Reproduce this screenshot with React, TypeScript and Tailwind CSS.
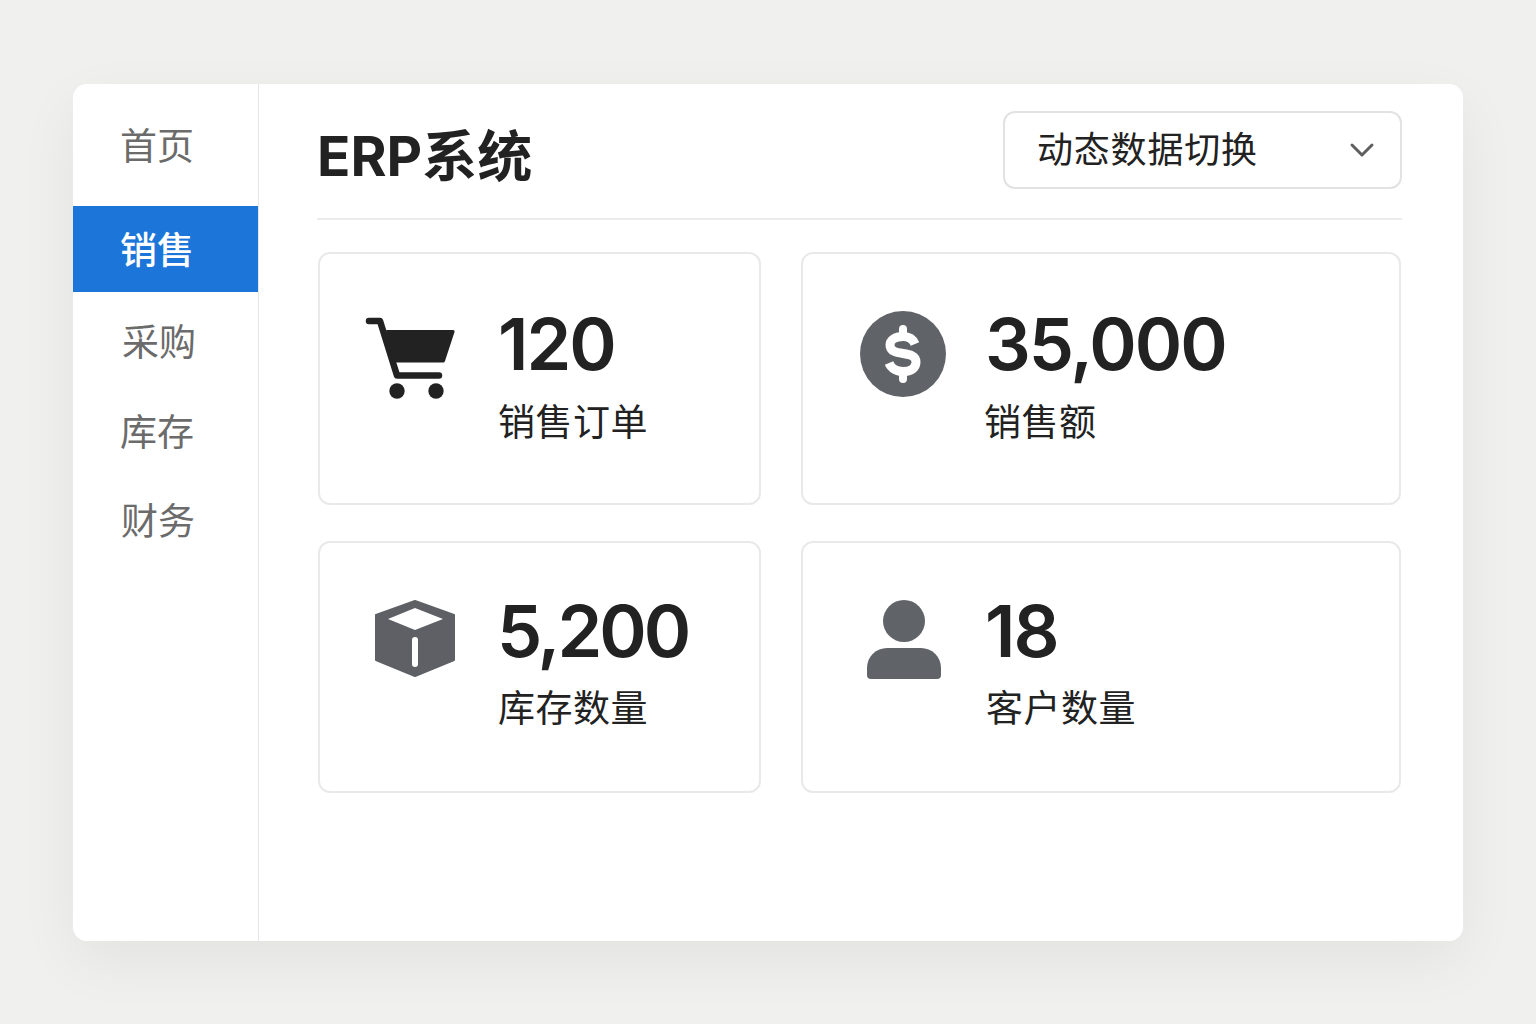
const navItems = [
  { label: '首页', className: 'h-[122px] pl-[47px] pt-[4px] text-[#6b6b6b]' },
  { label: '销售', className: 'h-[86px] pl-[47px] pt-[3px] bg-[#1c75d8] font-medium text-white' },
  { label: '采购', className: 'mt-[6px] h-[89px] pl-[49px] text-[#6b6b6b]' },
  { label: '库存', className: 'h-[89px] pl-[47px] pt-[2px] text-[#6b6b6b]' },
  { label: '财务', className: 'h-[89px] pl-[48px] pt-[2px] text-[#6b6b6b]' },
];

function CartIcon() {
  return (
    <svg viewBox="0 0 96 96" className="ml-[41px] mt-[56px] h-[96px] w-[96px] shrink-0">
      <path d="M8 11h11l17 54.500h42" fill="none" stroke="#222" strokeWidth="6.5" strokeLinecap="round" strokeLinejoin="round" />
      <path d="M25 20h67a1.500 1.500 0 0 1 1.500 2L84 51a2 2 0 0 1-2 1.500H34a2 2 0 0 1-2-1.500z" fill="#222" />
      <circle cx="36" cy="81" r="7.700" fill="#222" />
      <circle cx="75" cy="81" r="7.700" fill="#222" />
    </svg>
  );
}

function DollarIcon() {
  return (
    <svg viewBox="0 0 96 96" className="ml-[52px] mt-[52px] h-[96px] w-[96px] shrink-0">
      <circle cx="48" cy="48" r="43" fill="#606368" />
      <path
        d="M60 38C58 33 54 30.500 48 30.500 40 30.500 35 34 35 39 35 52 61 43 61 56 61 62 56 65.500 48 65.500 41 65.500 36 62 34 57"
        fill="none"
        stroke="#fff"
        strokeWidth="9"
      />
      <path d="M48 23v6M48 67v6" fill="none" stroke="#fff" strokeWidth="8" strokeLinecap="round" />
    </svg>
  );
}

function BoxIcon() {
  return (
    <svg viewBox="0 0 96 96" className="ml-[47px] mt-[47px] h-[96px] w-[96px] shrink-0">
      <path d="M48 11 87 25v45L48 86 9 70V25z" fill="#5e6065" stroke="#5e6065" strokeWidth="2" strokeLinejoin="round" />
      <path d="M48 18 76 29 48 40 21 29z" fill="#fff" />
      <rect x="45" y="47" width="6" height="30" rx="3" fill="#fff" />
    </svg>
  );
}

function PersonIcon() {
  return (
    <svg viewBox="0 0 96 96" className="ml-[52px] mt-[47px] h-[96px] w-[96px] shrink-0">
      <circle cx="49" cy="31" r="21" fill="#606368" />
      <path d="M12 85V78a20 20 0 0 1 20-20h34a20 20 0 0 1 20 20v7a4 4 0 0 1-4 4H16a4 4 0 0 1-4-4z" fill="#606368" />
    </svg>
  );
}

type StatProps = {
  icon: React.ReactNode;
  value: string;
  label: string;
  card: string;
  text: string;
  valueClass: string;
  labelClass: string;
};

function StatCard({ icon, value, label, card, text, valueClass, labelClass }: StatProps) {
  return (
    <div className={card}>
      {icon}
      <div className={text}>
        <div className={valueClass}>{value}</div>
        <div className={labelClass}>{label}</div>
      </div>
    </div>
  );
}

export default function App() {
  return (
    <div className="min-h-[1024px] bg-[#f0f0ee] pt-[84px] pl-[73px] font-['Inter','Noto_Sans_CJK_SC',sans-serif]">
      <div className="flex h-[857px] w-[1390px] overflow-hidden rounded-[14px] bg-white shadow-[0_20px_60px_rgba(0,0,0,0.06)]">
        <aside className="w-[186px] shrink-0 border-r border-[#e6e7e9]">
          {navItems.map((item) => (
            <div key={item.label} className={`flex items-center text-[37px] ${item.className}`}>
              {item.label}
            </div>
          ))}
        </aside>

        <main className="w-[1143px] pl-[58px]">
          <header className="flex h-[136px] items-start justify-between border-b-2 border-[#ebebeb]">
            <h1 className="mt-[39px] text-[55px] leading-[66px] font-bold text-[#222]">ERP系统</h1>
            <button className="mt-[27px] flex h-[78px] w-[399px] items-center justify-between rounded-[12px] border-2 border-[#e2e2e2] pr-[25px] pl-[32px] text-[36px] tracking-[0.8px] text-[#222]">
              动态数据切换
              <svg viewBox="0 0 24 24" className="h-[24px] w-[26px]" fill="none" stroke="#5f5f5f" strokeWidth="3" strokeLinecap="round" strokeLinejoin="round">
                <path d="M2 7l10 10L22 7" />
              </svg>
            </button>
          </header>

          <div className="mt-[32px] ml-[1px] grid w-[1083px] grid-cols-[443px_600px] gap-x-[40px] gap-y-[36px]">
            <StatCard
              icon={<CartIcon />}
              value="120"
              label="销售订单"
              card="flex h-[253px] items-start rounded-[12px] border-2 border-[#e9e9e9]"
              text="mt-[50px] ml-[41px]"
              valueClass="h-[80px] text-[72px] leading-[80px] font-semibold tracking-[-2px] text-[#222]"
              labelClass="mt-[17px] text-[37px] leading-[44px] tracking-[0.5px] text-[#222]"
            />
            <StatCard
              icon={<DollarIcon />}
              value="35,000"
              label="销售额"
              card="flex h-[253px] items-start rounded-[12px] border-2 border-[#e9e9e9]"
              text="mt-[50px] ml-[34px]"
              valueClass="h-[80px] text-[72px] leading-[80px] font-semibold tracking-[-2px] text-[#222]"
              labelClass="mt-[17px] -ml-[1px] text-[37px] leading-[44px] tracking-[0.5px] text-[#222]"
            />
            <StatCard
              icon={<BoxIcon />}
              value="5,200"
              label="库存数量"
              card="flex h-[252px] items-start rounded-[12px] border-2 border-[#e9e9e9]"
              text="mt-[48px] ml-[34px]"
              valueClass="h-[80px] text-[72px] leading-[80px] font-semibold tracking-[-3px] text-[#222]"
              labelClass="mt-[16px] ml-[1px] text-[37px] leading-[44px] tracking-[0.5px] text-[#222]"
            />
            <StatCard
              icon={<PersonIcon />}
              value="18"
              label="客户数量"
              card="flex h-[252px] items-start rounded-[12px] border-2 border-[#e9e9e9]"
              text="mt-[48px] ml-[34px]"
              valueClass="h-[80px] text-[72px] leading-[80px] font-semibold tracking-[-2px] text-[#222]"
              labelClass="mt-[16px] ml-[1px] text-[37px] leading-[44px] tracking-[0.5px] text-[#222]"
            />
          </div>
        </main>
      </div>
    </div>
  );
}
